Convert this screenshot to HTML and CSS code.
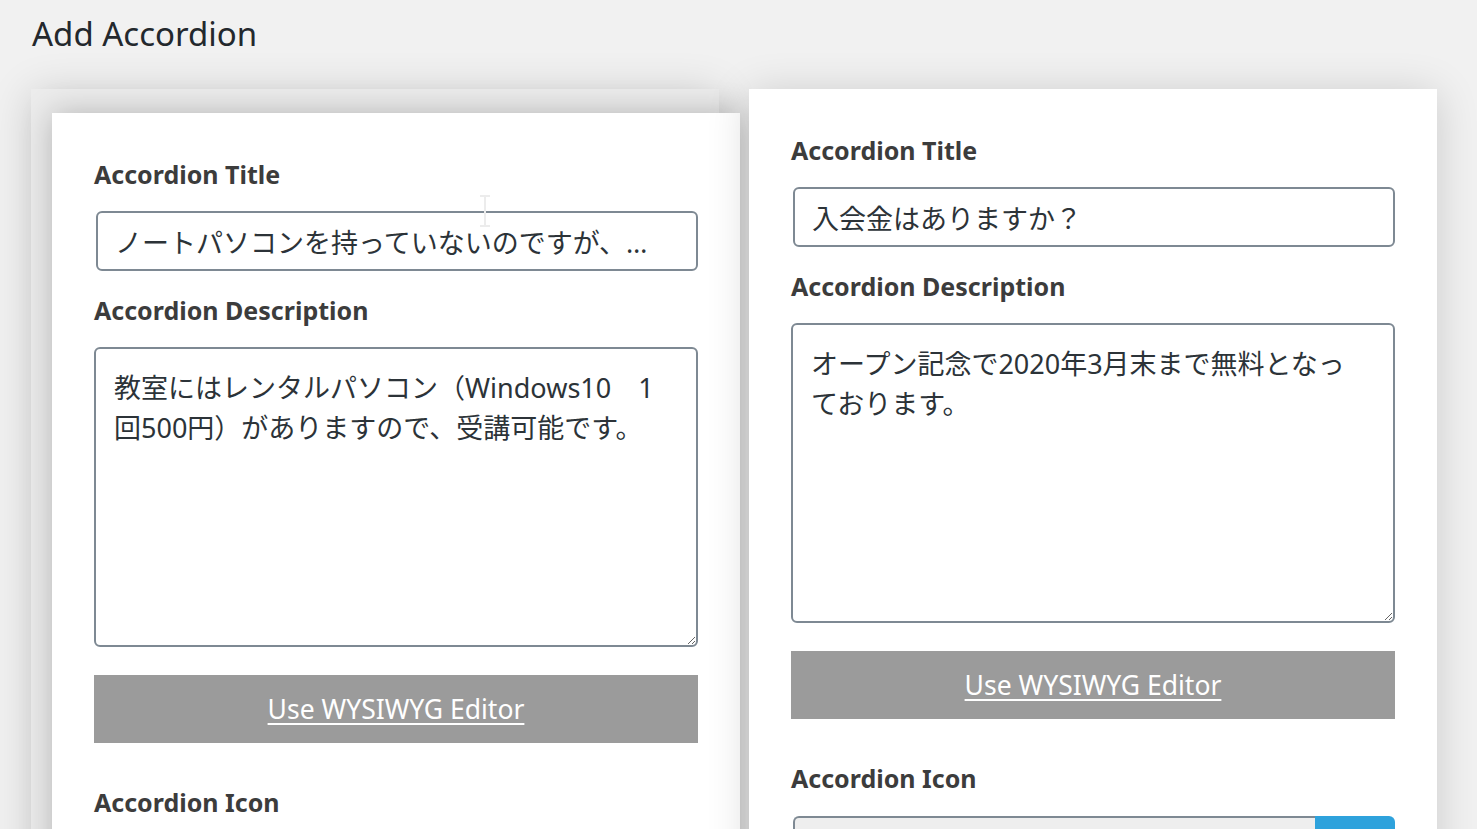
FILE: index.html
```html
<!DOCTYPE html>
<html lang="ja">
  <head>
    <meta charset="UTF-8" />
    <title>Add Accordion</title>
    <link rel="stylesheet" href="styles.css">
  </head>
  <body>
    <h1 class="page-title">Add Accordion</h1>
    <div class="board">
      <!-- 左：ドラッグ中のカードとプレースホルダー -->
      <div class="slot">
        <div class="placeholder"></div>
        <div class="card card-dragging">
          <label class="field-label">Accordion Title</label>
          <input class="field-input" type="text" value="ノートパソコンを持っていないのですが、受講できますか？" />
          <label class="field-label">Accordion Description</label>
          <textarea class="field-text">教室にはレンタルパソコン（Windows10　1回500円）がありますので、受講可能です。</textarea>
          <a class="editor-btn" href="#">Use WYSIWYG Editor</a>
          <label class="field-label label-icon">Accordion Icon</label>
          <div class="icon-picker">
            <div class="icon-value"></div>
            <div class="icon-btn"></div>
          </div>
        </div>
        <div class="cursor-beam"></div>
      </div>

      <!-- 右 -->
      <div class="slot">
        <div class="card">
          <label class="field-label">Accordion Title</label>
          <input class="field-input" type="text" value="入会金はありますか？" />
          <label class="field-label">Accordion Description</label>
          <textarea class="field-text">オープン記念で2020年3月末まで無料となっております。</textarea>
          <a class="editor-btn" href="#">Use WYSIWYG Editor</a>
          <label class="field-label label-icon">Accordion Icon</label>
          <div class="icon-picker">
            <div class="icon-value"></div>
            <div class="icon-btn"></div>
          </div>
        </div>
      </div>
    </div>
  </body>
</html>
```

FILE: styles.css
```css
html, body {
  height: 100%;
  overflow: hidden;
}

body {
  margin: 0;
  background: #f1f1f1;
  font-family: "Noto Sans", "Noto Sans CJK JP", sans-serif;
  color: #3c3c3c;
}

.page-title {
  margin: 0;
  padding: 14px 0 0 32px;
  height: 75px;
  box-sizing: border-box;
  font-size: 33px;
  font-weight: 400;
  line-height: 40px;
  color: #23282d;
}

.board {
  display: flex;
  gap: 30px;
  padding: 14px 0 0 31px;
}

.slot {
  position: relative;
  width: 688px;
}

.placeholder {
  height: 800px;
  background: #ececec;
  box-shadow: 0 4px 40px rgba(0, 0, 0, 0.16);
}

.card {
  background: #fff;
  padding: 42px 42px 0 42px;
  height: 800px;
  box-sizing: border-box;
  box-shadow: 0 4px 40px rgba(0, 0, 0, 0.16);
  display: flex;
  flex-direction: column;
}

/* ドラッグ中のカード */
.card-dragging {
  position: absolute;
  left: 21px;
  top: 24px;
  width: 688px;
  box-shadow: 0 0 30px rgba(0, 0, 0, 0.24);
}

.field-label {
  font-size: 25px;
  font-weight: 700;
  line-height: 38px;
  color: #3c3c3c;
  margin-bottom: 18px;
}

.label-icon {
  margin-top: 40px;
  margin-bottom: 19px;
}

.field-input {
  height: 60px;
  margin: 0 0 20px 2px;
  padding: 0 24px 0 17px;
  box-sizing: border-box;
  border: 2px solid #7e8993;
  border-radius: 6px;
  font-family: "Noto Sans", "Noto Sans CJK JP", sans-serif;
  font-size: 27px;
  color: #2c3338;
  text-overflow: ellipsis;
  outline: none;
}

.field-text {
  height: 300px;
  padding: 19px 28px 16px 18px;
  box-sizing: border-box;
  border: 2px solid #7e8993;
  border-radius: 6px;
  font-family: "Noto Sans", "Noto Sans CJK JP", sans-serif;
  font-size: 27px;
  line-height: 40px;
  color: #2c3338;
  outline: none;
  margin: 0;
}

.editor-btn {
  display: block;
  margin-top: 28px;
  height: 68px;
  line-height: 68px;
  background: #9b9b9b;
  color: #fff;
  text-align: center;
  font-size: 26.5px;
  text-decoration: underline;
  text-underline-offset: 4px;
  text-decoration-thickness: 2px;
}

.icon-picker {
  display: flex;
  height: 60px;
}

.icon-value {
  flex: 1;
  margin-left: 2px;
  background: #eee;
  border: 2px solid #7e8993;
  border-right: none;
  border-radius: 6px 0 0 0;
}

.icon-btn {
  width: 80px;
  background: #2ea2dc;
  border-radius: 0 6px 0 0;
}

.cursor-beam {
  position: absolute;
  left: 449px;
  top: 106px;
  width: 10px;
  height: 32px;
  border-top: 2px solid #ececec;
  border-bottom: 2px solid #ececec;
  box-sizing: border-box;
}

.cursor-beam::after {
  content: "";
  position: absolute;
  left: 4px;
  top: 0;
  bottom: 0;
  width: 2px;
  background: #ececec;
}
```
